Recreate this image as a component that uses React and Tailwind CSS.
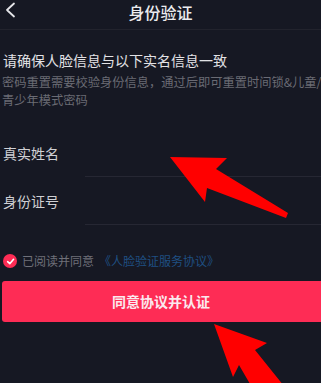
import React from 'react';

const FONT = { fontFamily: '"Noto Sans CJK SC", "Noto Sans", sans-serif' };

function BackIcon() {
  return (
    <svg width="12" height="16" viewBox="0 0 12 16" fill="none">
      <path d="M10 1.5 L3 8 L10 14.5" stroke="#e6e6ea" strokeWidth="1.8" strokeLinecap="round" strokeLinejoin="round" />
    </svg>
  );
}

function CheckIcon() {
  return (
    <span className="flex items-center justify-center w-[14px] h-[14px] rounded-full bg-[#fe2c55]">
      <svg width="9" height="9" viewBox="0 0 10 10" fill="none">
        <path d="M1.8 5.2 L4.2 7.4 L8.4 2.6" stroke="#fff" strokeWidth="1.8" strokeLinecap="round" strokeLinejoin="round" />
      </svg>
    </span>
  );
}

function FieldRow({ label }) {
  return (
    <div className="flex items-center h-[48px]">
      <div className="w-[85px] pl-[3px] text-[14px] text-[#cfd0d4]">{label}</div>
      <div className="flex-1 h-full border-b border-[#262733]" />
    </div>
  );
}

export default function App() {
  return (
    <div className="relative w-[321px] h-[383px] overflow-hidden bg-[#161823]" style={FONT}>
      {/* header */}
      <div className="relative flex items-center justify-center h-[30px] border-b border-[#22232d] pb-[6px]">
        <div className="absolute left-[4px] top-[2px]">
          <BackIcon />
        </div>
        <h1 className="text-[16px] font-medium text-[#ececef] leading-[20px]">身份验证</h1>
      </div>

      <div className="flex flex-col">
        <div className="mt-[20px] pl-[3px] text-[14px] leading-[20px] text-[#e2e2e6]">
          请确保人脸信息与以下实名信息一致
        </div>
        <div className="mt-[3px] pl-[2px] text-[12.25px] leading-[18px] text-[#6a6b74] whitespace-nowrap">
          密码重置需要校验身份信息，通过后即可重置时间锁&amp;儿童/
          <br />
          青少年模式密码
        </div>

        <div className="mt-[20px] flex flex-col">
          <FieldRow label="真实姓名" />
          <FieldRow label="身份证号" />
        </div>

        <div className="mt-[29px] flex items-center gap-[5px] pl-[3px] h-[14px]">
          <CheckIcon />
          <span className="text-[12px] text-[#6f7079] leading-[14px]">已阅读并同意</span>
          <span className="text-[12px] text-[#1f4f82] leading-[14px]">《人脸验证服务协议》</span>
        </div>

        <button className="mt-[13px] ml-[2px] w-[326px] h-[41px] rounded-[3px] bg-[#fe2c55] text-[14px] font-bold text-[#fbe9ee] flex items-center justify-center pr-[8px]">
          同意协议并认证
        </button>
      </div>

      {/* red annotation arrows */}
      <svg className="absolute inset-0 pointer-events-none" width="321" height="383" viewBox="0 0 321 383">
        <polygon points="170,157 227,158 216,169 288,213 286,218 207,188 205,202" fill="#ff0000" />
        <polygon points="214,324 267,343 255,350 292,396 264,408 239,365 233,377" fill="#ff0000" />
      </svg>
    </div>
  );
}
